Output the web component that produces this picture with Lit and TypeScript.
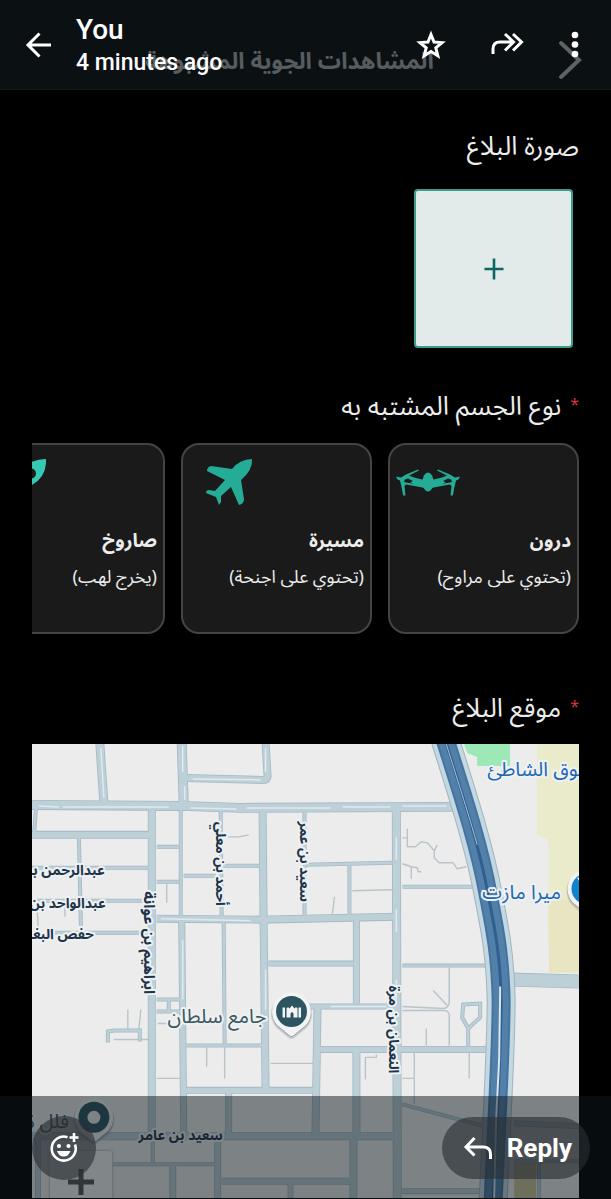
import { LitElement, html, css, svg } from "lit";
import { customElement, state } from "lit/decorators.js";

type Road = [width: number, d: string];

const ROADS: Road[] = [
  [9, "M99 744L103 803"],
  [10, "M181 744L183 804"],
  [8, "M185 778L262 780Q267 780 267 776L265 744"],
  [4, "M35 808L33 835"],
  [8, "M31 835H150"],
  [8, "M151 810V1140"],
  [4, "M152 1140V1163"],
  [4, "M78 838L80 926"],
  [4, "M31 868H148"],
  [4, "M31 901H148"],
  [4, "M53 933H148"],
  [4, "M180 810V917"],
  [7, "M181 920L183 1133"],
  [4, "M156 847H178"],
  [4, "M156 882H178"],
  [4, "M220 811L221 917"],
  [4, "M223 921L224 1045"],
  [4, "M183 876H215"],
  [4, "M222 866H259"],
  [8, "M262 811L263 918L265 1090"],
  [4, "M304 811V916"],
  [4, "M306 865L392 863"],
  [4, "M349 866V915"],
  [7, "M356 919V1004"],
  [6, "M268 964H353"],
  [4, "M402 887H472"],
  [4, "M402 966H488"],
  [6, "M308 1007H393"],
  [8, "M317 1008L315 1136"],
  [7, "M318 1050H488"],
  [8, "M356 1052V1135"],
  [4, "M185 1046H263"],
  [7, "M184 1091H315"],
  [7, "M228 1093V1135"],
  [8, "M31 1137H395"],
  [7, "M217 1141V1199"],
  [4, "M112 1165H216"],
  [7, "M172 1166V1199"],
  [7, "M221 1182H352"],
  [6, "M290 1184V1199"],
  [8, "M353 1138V1199"],
  [6, "M37 1140V1199"],
  [4, "M402 1105L484 1127"],
  [6, "M402 1192H484"],
  [4, "M156 1000H180M156 1012H180M168 1001V1011"],
  [4, "M107 1043V1032L113 1031H139V1042"],
  [4, "M463 1005L480 1004V1018L468 1029L462 1018ZM468 1029V1047"],
  [6, "M514 1124L579 1127"],
  [4, "M539 1162V1199M579 1162H514"],
  [14, "M510 980L579 982"],
  [8, "M156 919L260 920L395 917"],
  [9, "M396 811L397 1199"],
  [10, "M31 805L180 806L240 808L452 807"],
];

const LANES =
  "M38 806L58 807M62 807L168 807M190 808L236 809M246 808H330M342 807H390M402 806H446M182 746V772M184 786V800M192 779L260 780M265 748V772M100 748L103 798M396 838V860M396 910V932M396 980V1000M265 970V1010M182 940V1000M160 919L250 921M330 1007H386";

const PATHS =
  "M166 884V903M227 837L238 837L248 835M352 891L392 890M332 914L334 897M156 1079H181M206 1048V1067M224 1048V1079M127 1010V1030M140 1010L138 1030M113 1040H148M270 1064H313M36 912Q38 924 36 932M64 906V917M402 838H407M407 829V847H415L421 842L427 843L434 851L437 845M434 851V858L439 863H453L457 869L466 867M402 864L411 867V879M411 867L417 868L418 872H421M449 968V1003Q448 1009 442 1009L402 1007M402 1011H443Q449 1011 449 1016V1046M433 991L447 1006M426 1029V1046M469 1053V1079M365 1080V1058H376V1055M414 1053V1105M402 1079H414M157 1024H168";

const HIGHWAY = "M445 740C464 800 480 850 488 895C496 935 500 958 501 1000C501 1050 497 1110 493 1202";

const PIN = "M-3 23L-14 14A19.500 19.500 0 1 1 14 14L3 23Q0 26 -3 23Z";

const pin = (x: number, y: number, fill: string) => svg`
  <path class="pin-blur" transform="translate(${x} ${y + 2})" d=${PIN} />
  <path class="pin-shadow" transform="translate(${x} ${y + 1})" d=${PIN} />
  <path fill="#f3f3f3" transform="translate(${x} ${y})" d=${PIN} />
  <circle cx=${x} cy=${y} r="15.500" fill=${fill} />
`;

@customElement("street-map")
export class StreetMap extends LitElement {
  static styles = css`
    :host {
      display: block;
      position: relative;
      overflow: hidden;
      background: #ececec;
    }
    .map {
      display: block;
      width: 100%;
    }
    .edge { fill: none; stroke: #a3b9c3; }
    .fill { fill: none; stroke: #bdd0d8; }
    .lane { fill: none; stroke: #dfe9ee; stroke-width: 1.5; }
    .path { fill: none; stroke: #b8c4ca; stroke-width: 1.4; stroke-linejoin: round; }
    .pin-shadow { fill: #6f7a80; opacity: 0.7; }
    .pin-blur { fill: none; stroke: #6f7a80; stroke-width: 2; opacity: 0.3; }
    text {
      font-family: "Noto Sans Arabic", "DejaVu Sans", sans-serif;
      direction: rtl;
      paint-order: stroke;
      stroke: #eef1f2;
      stroke-width: 4px;
      stroke-linejoin: round;
    }
    .street { font-size: 14px; font-weight: 700; fill: #22344a; }
    .long { font-size: 15px; }
    .place { font-size: 20px; fill: #3b5660; }
    .shop { font-size: 20px; fill: #2268b0; }
    .mid { text-anchor: middle; }
    .end { text-anchor: end; }
    .zoom {
      position: absolute;
      left: 18px;
      bottom: -15px;
      width: 62px;
      height: 62px;
      padding: 0;
      border: 0;
      border-radius: 2px;
      background: #f4f4f4;
      box-shadow: 0 0 3px #9a9a9a;
    }
    .zoom svg { display: block; margin: auto; }
  `;

  render() {
    return html`
      <svg class="map" viewBox="31 744 548 455" role="img" aria-label="موقع البلاغ">
        <path fill="#eaebcb" d="M537 744H579V973H549V850L547 839L537 835Z" />
        <path fill="#e9e5c2" d="M548 900H579V973H549Z" />
        <path fill="#cfc697" d="M514 1162H536V1199H514Z" />
        <path fill="#9ce8b6" d="M464 744H510V766H477V757L467 753Z" />
        <path class="path" d=${PATHS} />
        ${ROADS.map(([w, d]) => svg`<path class="edge" stroke-width=${w} d=${d} />`)}
        ${ROADS.map(([w, d]) => svg`<path class="fill" stroke-width=${w - 1.6} d=${d} />`)}
        <path class="lane" d=${LANES} />
        <g fill="none">
          <path d=${HIGHWAY} stroke="#9fb4c0" stroke-width="29" />
          <path d=${HIGHWAY} stroke="#c4d8e2" stroke-width="27" />
          <path d=${HIGHWAY} stroke="#4674a0" stroke-width="19" />
          <path d=${HIGHWAY} stroke="#5380a9" stroke-width="15" />
          <path d=${HIGHWAY} stroke="#2f5f90" stroke-width="3" />
          <path d="M446 744C463 798 470 820 477 845" stroke="#a9c3d8" stroke-width="1" />
          <path d="M500 987V994L499 1060L496 1120L494 1199" stroke="#dbe6ee" stroke-width="2" />
        </g>
        <text class="street mid" transform="translate(215 864) rotate(90)">أحمد بن معلي</text>
        <text class="street mid" transform="translate(299 862) rotate(90)">سعيد بن عمر</text>
        <text class="street long mid" transform="translate(143 943) rotate(90)">ابراهيم بن عوانة</text>
        <text class="street mid" transform="translate(389 1030) rotate(90)">النعمان بن مرة</text>
        <text class="street" x="104" y="875">عبدالرحمن بن</text>
        <text class="street" x="105" y="908">عبدالواحد بن</text>
        <text class="street" x="93" y="939">حفص البغدادي</text>
        <text class="street mid" x="180" y="1141">سعيد بن عامر</text>
        <text class="place" x="266" y="1024">جامع سلطان</text>
        <text class="place" x="68" y="1129">فلل ة</text>
        <text class="shop end" x="487" y="776">سوق الشاطئ</text>
        <text class="shop" x="561" y="899">ميرا مازت</text>
        ${pin(291, 1012, "#2c5561")}
        <path fill="#f3f3f3" d="M282 1008h2.500v10h-2.500zM298 1008h2.500v10h-2.500zM286 1018v-9l1.500-1.500 1.500 1.500v0l2.500-3 2.500 3 1.500-1.500 1.500 1.500v9h-4v-4q-1.500-2.500-3 0v4z" />
        ${pin(93, 1118, "#2c5561")}
        <circle cx="93" cy="1118" r="6.500" fill="#ececec" />
        ${pin(587, 889, "#1182cc")}
        <path fill="#fff" d="M577 878h4v3h-2z" />
      </svg>
      <button class="zoom" aria-label="تكبير">
        <svg width="26" height="26" viewBox="0 0 26 26"><path d="M13 0V26M0 13H26" stroke="#555" stroke-width="5" /></svg>
      </button>
    `;
  }
}

const DRONE_SIDE =
  "M32 27L26 28.500 18 26.500 13 24.500 23 19.500 22 18.500 10 23.500 5 26.500 0 25.500 1.500 28.500 4 29.500 6 38 7 44.500 9.500 44.500 8.500 35 10 33.500 24 36 28 37H32ZM9 28.500L12 27.500 17 30 14 31.500 18 33 8 31Z";
const drone = svg`
  <g fill="#25ac97" fill-rule="evenodd">
    <path d=${DRONE_SIDE} />
    <path d=${DRONE_SIDE} transform="translate(64 0) scale(-1 1)" />
    <ellipse cx="32" cy="31" rx="5.500" ry="9.500" />
  </g>`;
const plane = svg`<path fill="#25ac97" d="M63 8Q64 19 52 29L55 48Q55 53 50 54L42 36 32 45 32 51 30 54 27 46 17 42Q17 39 20 39L26 40 36 29 18 20Q18 16 22 15L43 18Q51 8 63 8Z" />`;
const rocket = svg`<path fill="#35c9b3" fill-rule="evenodd" d="M64 8Q65 25 50 34L38 44 26 32 38 20Q48 8 64 8ZM49 17.500A5 5 0 1 0 49 27.500 5 5 0 1 0 49 17.500Z" />`;

const KINDS = [
  { icon: drone, name: "درون", note: "(تحتوي على مراوح)" },
  { icon: plane, name: "مسيرة", note: "(تحتوي على اجنحة)" },
  { icon: rocket, name: "صاروخ", note: "(يخرج لهب)" },
];

@customElement("app-root")
export class AppRoot extends LitElement {
  @state() private picked = -1;

  static styles = css`
    :host {
      display: block;
      position: relative;
      min-height: 100vh;
      overflow: hidden;
      background: #000;
      color: #ececec;
      font-family: "Noto Sans Arabic", "DejaVu Sans", sans-serif;
    }
    button { font: inherit; color: inherit; cursor: pointer; }
    svg { display: block; }
    .page { display: flex; flex-direction: column; padding: 0 32px; }
    .title {
      display: grid;
      grid-template-columns: 32px 1fr;
      align-items: center;
      height: 88px;
      padding-top: 36px;
      box-sizing: border-box;
    }
    .title h1 { margin: 0; font-size: 23px; line-height: 40px; font-weight: 700; text-align: center; white-space: nowrap; }
    .title .next { padding: 0; border: 0; background: none; margin-inline-start: -8px; }
    h2 { display: flex; gap: 9px; margin: 0; font-size: 26px; font-weight: 400; line-height: 36px; }
    .star { color: #d5363d; font-size: 16px; line-height: 32px; }
    .photo { padding-top: 41px; }
    .add {
      display: grid;
      place-items: center;
      width: 159px;
      height: 159px;
      margin: 24px 6px 0;
      padding: 0;
      border: 2px solid #3d9c8d;
      border-radius: 4px;
      background: #e2ebea;
    }
    .kind { padding-top: 41px; }
    .cards { display: flex; gap: 16px; margin-top: 18px; overflow: hidden; }
    .card {
      flex: none;
      display: flex;
      flex-direction: column;
      width: 191px;
      height: 191px;
      padding: 6px;
      border: 2px solid #444;
      border-radius: 18px;
      background: #1a1a1a;
      text-align: start;
    }
    .card svg { align-self: flex-end; }
    .card .name { padding-top: 8px; font-size: 19px; font-weight: 700; line-height: 36px; }
    .card .note { font-size: 18px; line-height: 36px; white-space: nowrap; }
    .place { padding-top: 57px; }
    .place street-map { margin-top: 17px; }

    .bar {
      position: absolute;
      inset: 0 0 auto;
      display: flex;
      align-items: center;
      height: 90px;
      padding: 0 22px;
      box-sizing: border-box;
      background: rgba(16, 23, 28, 0.68);
      border-bottom: 1px solid #13181b;
      color: #fff;
      font-family: Roboto, sans-serif;
    }
    .bar button { flex: none; padding: 0; border: 0; background: none; }
    .who { flex: 1; padding-left: 22px; font-weight: 500; }
    .who strong { display: block; padding-top: 2px; font-size: 28px; font-weight: 500; line-height: 34px; }
    .who span { display: block; font-size: 23px; line-height: 32px; }
    .actions { display: flex; gap: 43px; }
    .foot {
      position: absolute;
      inset: auto 0 0;
      display: flex;
      justify-content: space-between;
      align-items: center;
      height: 103px;
      padding: 0 21px 0 32px;
      box-sizing: border-box;
      background: rgba(14, 24, 30, 0.5);
      color: #fff;
      font-family: Roboto, sans-serif;
    }
    .foot button {
      display: flex;
      align-items: center;
      justify-content: center;
      gap: 13px;
      height: 62px;
      padding: 0 18px 0 20px;
      border: 0;
      border-radius: 32px;
      background: rgba(42, 46, 52, 0.62);
      font-size: 26px;
      font-weight: 700;
    }
    .foot .react { width: 64px; height: 64px; padding: 0; }
  `;

  render() {
    return html`
      <main class="page" dir="rtl">
        <header class="title">
          <button class="next" aria-label="رجوع">
            <svg width="32" height="44" viewBox="0 0 32 44" fill="none" stroke="#fff" stroke-width="4" stroke-linecap="round"><path d="M6 3L24 20 6 37" /></svg>
          </button>
          <h1>المشاهدات الجوية المشبوهة</h1>
        </header>
        <section class="photo">
          <h2>صورة البلاغ</h2>
          <button class="add" aria-label="إضافة صورة">
            <svg width="20" height="22" viewBox="0 0 20 22"><path d="M10 0.500V21.500M0.500 11H19.500" stroke="#0d6660" stroke-width="2.600" /></svg>
          </button>
        </section>
        <section class="kind">
          <h2><span class="star">*</span>نوع الجسم المشتبه به</h2>
          <div class="cards">
            ${KINDS.map(
              (k, i) => html`
                <button class="card" aria-pressed=${this.picked === i} @click=${() => (this.picked = i)}>
                  <svg width="64" height="64" viewBox="0 0 64 64">${k.icon}</svg>
                  <span class="name">${k.name}</span>
                  <span class="note">${k.note}</span>
                </button>
              `
            )}
          </div>
        </section>
        <section class="place">
          <h2><span class="star">*</span>موقع البلاغ</h2>
          <street-map></street-map>
        </section>
      </main>

      <header class="bar">
        <button aria-label="Back">
          <svg width="32" height="32" viewBox="0 0 32 32" fill="none" stroke="#fff" stroke-width="3"><path d="M29 16H6M17.500 4.500L6 16 17.500 27.500" /></svg>
        </button>
        <div class="who"><strong>You</strong><span>4 minutes ago</span></div>
        <div class="actions">
          <button aria-label="Star">
            <svg width="32" height="32" viewBox="0 0 32 32" fill="none" stroke="#fff" stroke-width="3"><path d="M16 5.500L19 13 27 13.600 20.800 18.800 22.800 26.700 16 22.400 9.200 26.700 11.200 18.800 5 13.600 13 13Z" /></svg>
          </button>
          <button aria-label="Forward">
            <svg width="34" height="32" viewBox="0 0 34 32" fill="none" stroke="#fff" stroke-width="3"><path d="M3 25V20Q3 13 10 13H23M15 5L23.500 13 15 21.500M23 5L31.500 13 23 21.500" /></svg>
          </button>
          <button aria-label="More">
            <svg width="22" height="32" viewBox="0 0 22 32" fill="#fff"><circle cx="8" cy="6" r="3.300" /><circle cx="8" cy="15.500" r="3.300" /><circle cx="8" cy="25" r="3.300" /></svg>
          </button>
        </div>
      </header>

      <footer class="foot">
        <button class="react" aria-label="React">
          <svg width="32" height="32" viewBox="0 0 32 32" fill="none" stroke="#fff" stroke-width="2.600">
            <path d="M19.500 5.200A12 12 0 1 0 27 12.500" />
            <path d="M26 1V10M21.500 5.500H30.500" />
            <g fill="#fff" stroke="none"><circle cx="11" cy="14" r="2.100" /><circle cx="20.500" cy="14" r="2.100" /><path d="M9 19H22.500Q20.500 24.500 15.700 24.500T9 19Z" /></g>
          </svg>
        </button>
        <button>
          <svg width="32" height="32" viewBox="0 0 32 32" fill="none" stroke="#fff" stroke-width="3"><path d="M28.500 27V22Q28.500 15 21 15H4M12.500 6L4 15 12.500 23.500" /></svg>
          Reply
        </button>
      </footer>
    `;
  }
}
